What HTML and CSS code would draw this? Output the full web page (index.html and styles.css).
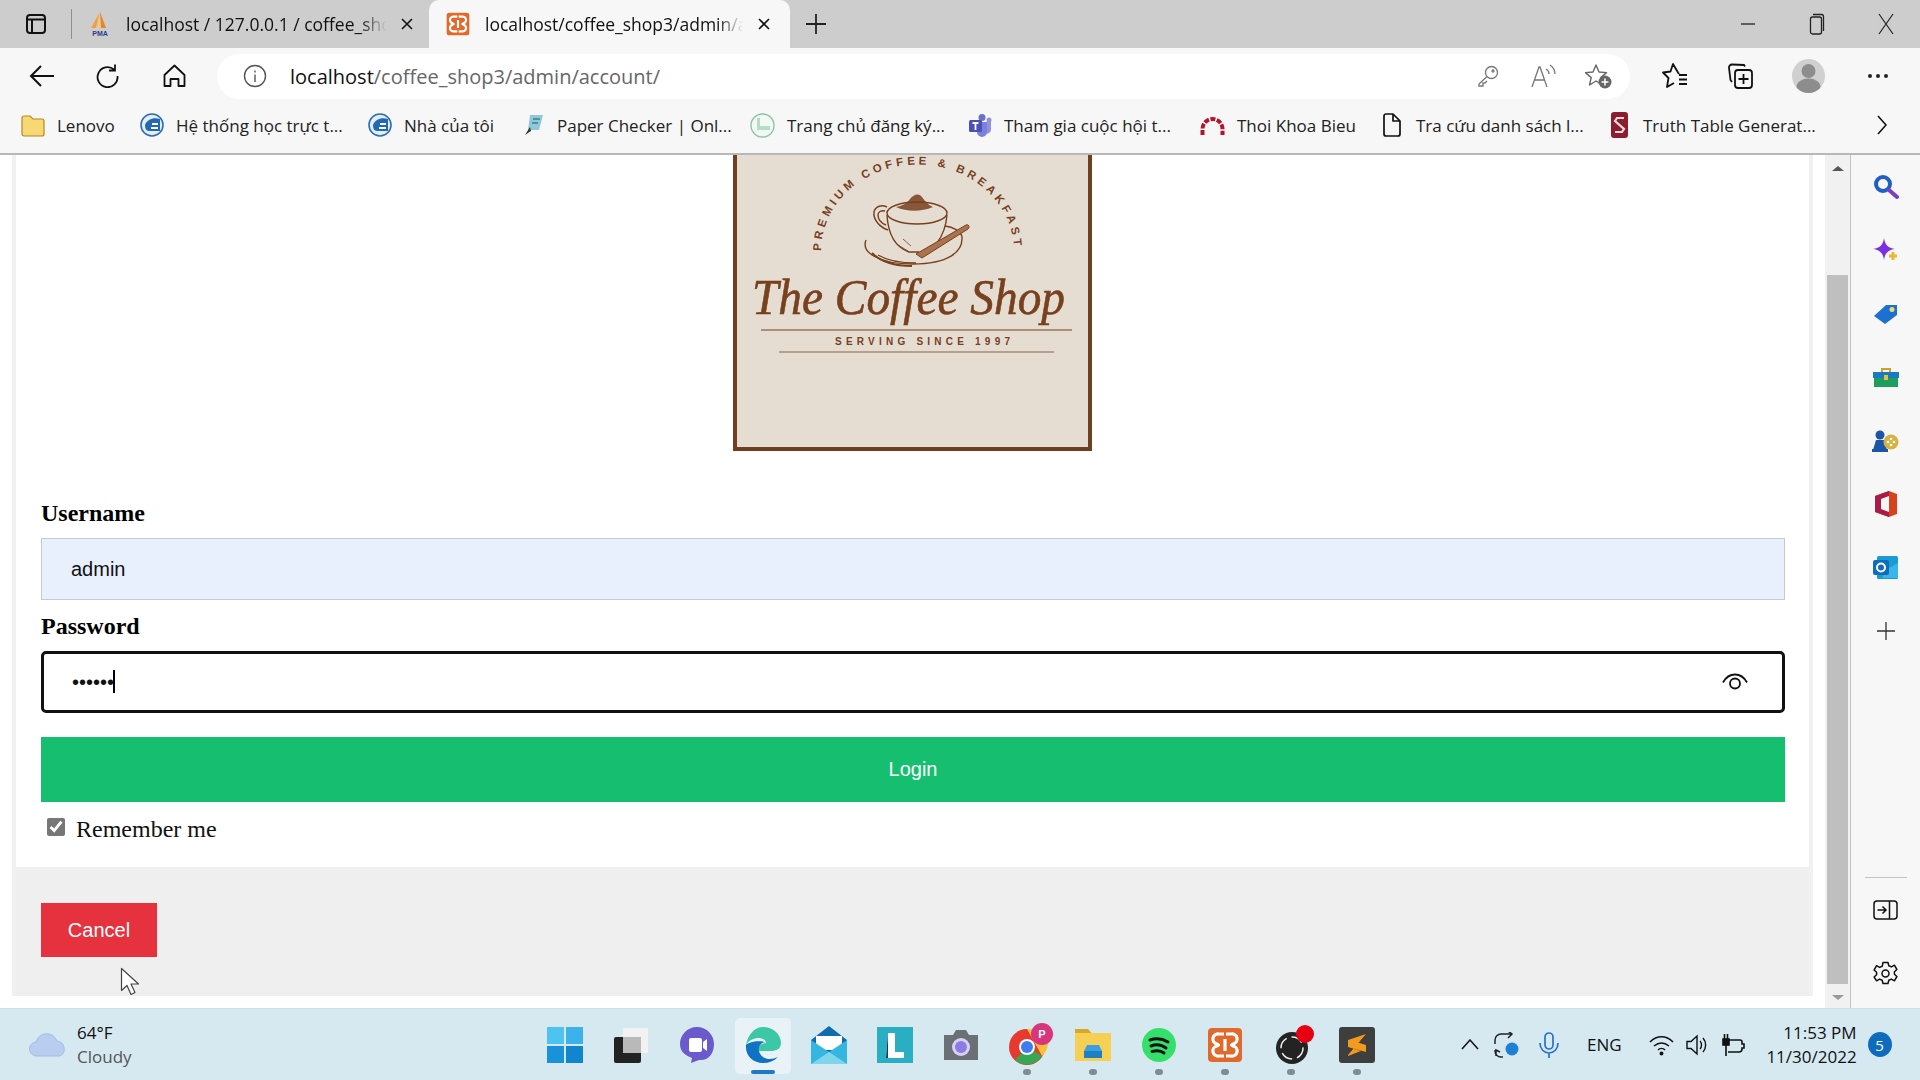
FILE: index.html
```html
<!DOCTYPE html>
<html lang="en">
  <head>
    <meta charset="UTF-8" />
    <title>localhost/coffee_shop3/admin/account/</title>
    <link rel="stylesheet" href="styles.css">
  </head>

  <body>
    <!-- shared icons -->
    <svg class="defs" aria-hidden="true">
      <symbol id="xampp" viewBox="0 0 36 36">
        <rect x="1" y="1" width="34" height="34" rx="4" fill="#e06a2c"/>
        <path d="M17 7h-5a5 5 0 0 0-2 10l1.500 1-1.500 1a5 5 0 0 0 2 10h5M19 7h5a5 5 0 0 1 2 10l-1.500 1 1.500 1a5 5 0 0 1-2 10h-5M18 12v12" fill="none" stroke="#fff" stroke-width="3.200" stroke-linejoin="round"/>
      </symbol>
      <symbol id="elearn" viewBox="0 0 24 24">
        <circle cx="12" cy="12" r="11" fill="#e4eef8" stroke="#2f6db3" stroke-width="1.6"/>
        <path d="M5 12c2-6 9-8 15-6v12H9c-3 0-4-3-4-6z" fill="#2268b2"/>
        <path d="M12 10h6v2h-6zm-1 4h7v2h-7z" fill="#fff"/>
      </symbol>
    </svg>

    <!-- tabs -->
    <header class="tabstrip">
      <svg class="tabstrip__toggle" width="20" height="20" viewBox="0 0 20 20" fill="none" stroke="#111" stroke-width="2"><rect x="1" y="1" width="18" height="18" rx="3"/><path d="M1 5.5h18M6 5.5V19" /></svg>
      <span class="tabstrip__divider"></span>
      <div class="tab">
        <svg width="24" height="26" viewBox="0 0 24 26"><path d="M12 1 3 17h5z" fill="#f0a040"/><path d="M12 1l1 16h5z" fill="#e8862a"/><path d="M12 3 9 17h3z" fill="#f7c77e"/><text x="12" y="25" text-anchor="middle" class="tab__pma">PMA</text></svg>
        <span class="tab__title">localhost / 127.0.0.1 / coffee_sho</span>
        <svg class="tab__close" width="14" height="14" viewBox="0 0 14 14" stroke="#111" stroke-width="1.6"><path d="M2 2l10 10M12 2 2 12"/></svg>
      </div>
      <div class="tab tab--active">
        <svg width="24" height="24"><use href="#xampp"/></svg>
        <span class="tab__title">localhost/coffee_shop3/admin/ac</span>
        <svg class="tab__close" width="14" height="14" viewBox="0 0 14 14" stroke="#111" stroke-width="1.6"><path d="M2 2l10 10M12 2 2 12"/></svg>
      </div>
      <svg class="tabstrip__new" width="22" height="22" viewBox="0 0 22 22" stroke="#222" stroke-width="1.8"><path d="M11 1v20M1 11h20"/></svg>
      <div class="winctl">
        <svg width="16" height="16" viewBox="0 0 16 16" stroke="#222" stroke-width="1.3"><path d="M1 8h14"/></svg>
        <svg width="16" height="26" viewBox="0 0 16 26" fill="none" stroke="#222" stroke-width="1.3"><rect x="1.5" y="6" width="11" height="17" rx="2"/><path d="M4 3.5h8.5a2 2 0 0 1 2 2V20"/></svg>
        <svg width="16" height="24" viewBox="0 0 16 24" stroke="#222" stroke-width="1.2"><path d="M1 2l14 20M15 2 1 22"/></svg>
      </div>
    </header>

    <!-- address bar -->
    <nav class="toolbar">
      <svg class="toolbar__back" width="26" height="24" viewBox="0 0 26 24" fill="none" stroke="#111" stroke-width="2"><path d="M25 12H2M12 2 2 12l10 10"/></svg>
      <svg class="toolbar__reload" width="25" height="24" viewBox="0 0 25 24" fill="none" stroke="#111" stroke-width="1.8"><path d="M19 5.5A10 10 0 1 0 22.5 12M20 .5v6h-6"/></svg>
      <svg class="toolbar__home" width="23" height="24" viewBox="0 0 23 24" fill="none" stroke="#111" stroke-width="1.8"><path d="M1.5 11 11.500 1.500 21.500 11v11h-6v-7h-8v7h-6z" stroke-linejoin="round"/></svg>
      <div class="omnibox">
        <svg class="omnibox__info" width="24" height="24" viewBox="0 0 24 24" fill="none" stroke="#555" stroke-width="1.400"><circle cx="12" cy="12" r="10.500"/><path d="M12 10.500V18M12 6.500v2"/></svg>
        <span class="omnibox__url"><b>localhost</b>/coffee_shop3/admin/account/</span>
        <svg class="omnibox__key" width="22" height="22" viewBox="0 0 22 22" fill="none" stroke="#777" stroke-width="1.300"><circle cx="14.500" cy="7.500" r="6"/><path d="M10 11.500 2 19v2h4v-3h2l2-2"/><circle cx="16" cy="6" r="1"/></svg>
        <svg class="omnibox__read" width="25" height="24" viewBox="0 0 25 24" fill="none" stroke="#777" stroke-width="1.300"><path d="M1 23 8 3h1l7 20M4 16h9M15 5c2 1 3 3 3 5M19 1c3 2 5 5 5 9"/></svg>
        <svg class="omnibox__fav" width="27" height="26" viewBox="0 0 27 26"><path d="M11 2l3 7 7.500.6-5.700 5 1.700 7.400-6.500-4-6.500 4 1.700-7.400-5.700-5L8 9z" fill="none" stroke="#666" stroke-width="1.400" stroke-linejoin="round"/><circle cx="20" cy="19" r="6.500" fill="#666"/><path d="M20 15.500v7M16.500 19h7" stroke="#fff" stroke-width="1.500"/></svg>
      </div>
      <svg class="toolbar__favs" width="26" height="26" viewBox="0 0 26 26" fill="none" stroke="#111" stroke-width="1.800"><path d="M17 11l-1-1.500L11 1 8.500 8.500 1 9.500l5.500 5.500L5 24l7-4M17 12h8M17 16.500h8M17 21h8" stroke-linejoin="round"/></svg>
      <svg class="toolbar__coll" width="26" height="26" viewBox="0 0 26 26" fill="none" stroke="#111" stroke-width="1.800"><rect x="8" y="7" width="17" height="18" rx="3"/><path d="M16.500 11v10M11.500 16h10M18 3.500 17 2 5 1.500a3 3 0 0 0-3 3.500l1.500 12 1.500 2"/></svg>
      <span class="avatar"><svg width="33" height="34" viewBox="0 0 33 34"><circle cx="16.500" cy="12" r="7" fill="#8d8d8d"/><ellipse cx="16.500" cy="28" rx="12" ry="8.500" fill="#8d8d8d"/></svg></span>
      <span class="toolbar__more"><i></i><i></i><i></i></span>
    </nav>

    <!-- favourites -->
    <div class="bookmarks">
      <a class="bookmark"><svg width="24" height="23" viewBox="0 0 24 23"><path d="M1 4a2 2 0 0 1 2-2h6l3 3h9a2 2 0 0 1 2 2v13a2 2 0 0 1-2 2H3a2 2 0 0 1-2-2z" fill="#f8d775" stroke="#b08a25" stroke-width="1.200"/></svg>Lenovo</a>
      <a class="bookmark"><svg width="24" height="24"><use href="#elearn"/></svg>Hệ thống học trực t...</a>
      <a class="bookmark"><svg width="24" height="24"><use href="#elearn"/></svg>Nhà của tôi</a>
      <a class="bookmark"><svg width="23" height="24" viewBox="0 0 23 24"><path d="M8 2h13l-4 15H6z" fill="#8fc9d8"/><path d="M11 6h7M10 10h6" stroke="#3a7f96" stroke-width="1.500"/><path d="M8 14l-5 8 6-4z" fill="#333"/></svg>Paper Checker | Onl...</a>
      <a class="bookmark"><svg width="25" height="25" viewBox="0 0 25 25"><circle cx="12.500" cy="12.500" r="11.500" fill="#f2f8f4" stroke="#8cc4a4" stroke-width="1.400"/><path d="M7 5v12h13v-4H10V5z" fill="#b6dcc4"/></svg>Trang chủ đăng ký...</a>
      <a class="bookmark"><svg width="23" height="24" viewBox="0 0 23 24"><circle cx="13" cy="4.500" r="3.500" fill="#6a6fd0"/><circle cx="20" cy="7" r="2.500" fill="#8f93e0"/><path d="M15 9h7v8a4 4 0 0 1-6 3z" fill="#8f93e0"/><path d="M7 9h11v10a5 5 0 0 1-10 0z" fill="#7b80da"/><rect y="7" width="13" height="12" rx="1.500" fill="#4b50b8"/><path d="M3.500 10h6M6.500 10v7" stroke="#fff" stroke-width="1.800"/></svg>Tham gia cuộc hội t...</a>
      <a class="bookmark"><svg width="25" height="20" viewBox="0 0 25 20" fill="none" stroke="#b5122c" stroke-width="4" stroke-dasharray="5 1.500"><path d="M2.500 20v-6a10 10 0 0 1 20 0v6"/></svg>Thoi Khoa Bieu</a>
      <a class="bookmark bookmark--narrow"><svg width="18" height="24" viewBox="0 0 18 24" fill="none" stroke="#111" stroke-width="1.700"><path d="M1 3a2 2 0 0 1 2-2h7l7 7v13a2 2 0 0 1-2 2H3a2 2 0 0 1-2-2zM10 1v7h7" stroke-linejoin="round"/></svg>Tra cứu danh sách l...</a>
      <a class="bookmark bookmark--narrow"><svg width="17" height="26" viewBox="0 0 17 26"><rect width="17" height="26" rx="3" fill="#8c1d2f"/><path d="M13 6H6L4 9l9 8-2 3H4" fill="none" stroke="#f2d9dc" stroke-width="2.200"/></svg>Truth Table Generat...</a>
      <svg class="bookmarks__more" width="10" height="20" viewBox="0 0 10 20" fill="none" stroke="#111" stroke-width="1.600"><path d="M1 1l8 9-8 9"/></svg>
    </div>

    <main class="viewport">
      <div class="page">
        <section class="modal">
          <div class="modal__body">
            <div class="logo">
              <svg width="359" height="296" viewBox="0 0 359 296">
                <rect x="2" y="-10" width="355" height="304" fill="#e6ddd2" stroke="#6f3f1f" stroke-width="4"/>
                <defs><path id="logo-arc" d="M88 96a96 86 0 0 1 193 0"/></defs>
                <text class="logo__arc"><textPath href="#logo-arc" textLength="282" lengthAdjust="spacing">PREMIUM COFFEE &amp; BREAKFAST</textPath></text>
                <g fill="none" stroke="#77401e" stroke-width="1.400">
                  <path d="M133 85c-5 12 12 24 47 24s50-12 49-27c-1-6-9-10-17-11"/>
                  <path d="M145 100c10 6 24 8 38 8"/>
                  <path d="M139 98c10 10 26 13 40 13" stroke-width="2"/>
                  <ellipse cx="184" cy="58" rx="30" ry="11"/>
                  <path d="M154 60c1 18 8 32 22 37h10M214 60c-1 12-4 20-10 28"/>
                  <path d="M154 52c-6-3-12 0-13 5-1 7 5 15 14 18M152 56c-4-1-7 1-7 4 0 4 3 8 8 10"/>
                  <path d="M165 90l10 6M170 84l8 7" stroke-width=".8"/>
                </g>
                <path d="M163 52c6-1 10-3 14-8 4-5 9-6 12-2 3 4 6 8 11 10-12 5-26 5-37 0z" fill="#77401e" opacity=".85"/>
                <path d="M183 99l50-29c3-1 4 2 2 4l-46 29z" fill="#a9734f" stroke="#77401e"/>
                <text x="19" y="159" class="logo__title" textLength="313" lengthAdjust="spacingAndGlyphs">The Coffee Shop</text>
                <path d="M28 175h311" stroke="#77401e" stroke-width="1.200"/>
                <text x="102" y="190" class="logo__since" textLength="175">SERVING SINCE 1997</text>
                <path d="M46 197h275" stroke="#a98a75" stroke-width="1.500"/>
              </svg>
            </div>
            <form class="login">
              <label class="login__label" for="username">Username</label>
              <input class="login__input login__input--filled" type="text" id="username" value="admin" />
              <label class="login__label" for="password">Password</label>
              <div class="login__pass">
                <input class="login__input login__input--focus" type="password" id="password" value="123456" />
                <span class="login__caret"></span>
                <svg class="login__eye" width="26" height="18" viewBox="0 0 26 18" fill="none" stroke="#111" stroke-width="1.800"><path d="M1 9.500C4 4 8 1.500 13 1.500s9 2.500 12 8"/><circle cx="13" cy="10.500" r="5"/></svg>
              </div>
              <button class="login__submit" type="button">Login</button>
              <label class="login__remember"><input type="checkbox" checked /> Remember me</label>
            </form>
          </div>
          <div class="modal__footer">
            <button class="cancel" type="button">Cancel</button>
          </div>
        </section>
        <svg class="pointer" width="20" height="29" viewBox="0 0 20 29"><path d="M1.500 1.500v22l5.500-5 4 9 4-2-4-8.500h7.500z" fill="#fff" stroke="#444" stroke-width="1.200" stroke-linejoin="round"/></svg>
      </div>

      <div class="scrollbar">
        <span class="scrollbar__up"></span>
        <span class="scrollbar__thumb"></span>
        <span class="scrollbar__down"></span>
      </div>

      <aside class="sidebar">
        <span class="sidebar__item"><svg width="26" height="26" viewBox="0 0 26 26" fill="none"><circle cx="10" cy="10" r="7" stroke="#1f5fc4" stroke-width="4"/><path d="M16 16l8 7" stroke="#7a3fc0" stroke-width="4" stroke-linecap="round"/></svg></span>
        <span class="sidebar__item"><svg width="27" height="24" viewBox="0 0 27 24"><path d="M12 0c1 7 4 10 11 11-7 1-10 4-11 11-1-7-4-10-11-11 7-1 10-4 11-11z" fill="#7a2fe0"/><path d="M21 14v8M17 18h8" stroke="#eab72e" stroke-width="3"/></svg></span>
        <span class="sidebar__item"><svg width="25" height="22" viewBox="0 0 25 22"><path d="M1 13 13 2h11v10L12 21z" fill="#1d6fd1"/><circle cx="19" cy="6.500" r="2.500" fill="#f5d76e"/></svg></span>
        <span class="sidebar__item"><svg width="26" height="20" viewBox="0 0 26 20"><path d="M9 5V2h8v3" fill="none" stroke="#c9a227" stroke-width="2"/><rect y="5" width="26" height="6" fill="#1b78c4"/><rect x="1" y="11" width="24" height="9" fill="#1f9d5c"/><rect x="11" y="8" width="4" height="5" fill="#e9c23c"/></svg></span>
        <span class="sidebar__item"><svg width="27" height="24" viewBox="0 0 27 24"><circle cx="8" cy="6" r="4.500" fill="#1a55a8"/><path d="M4 11h8l3 10H1z" fill="#1a55a8"/><rect y="20" width="16" height="3" fill="#1a55a8"/><circle cx="19" cy="13" r="7.500" fill="#d9b13f"/><circle cx="16" cy="13" r="1.300" fill="#fff"/><circle cx="22" cy="13" r="1.300" fill="#fff"/><circle cx="19" cy="10" r="1.300" fill="#fff"/><circle cx="19" cy="16" r="1.300" fill="#fff"/></svg></span>
        <span class="sidebar__item"><svg width="24" height="28" viewBox="0 0 24 28"><path d="M15 1 1 6v16l14 5 8-3V4z" fill="#d9411e"/><path d="M1 6l14-5v5L7 9v10l8 3v5L1 22z" fill="#a81c46"/><path d="M7 9l8-3v16l-8-3z" fill="#f7f7f7"/></svg></span>
        <span class="sidebar__item"><svg width="25" height="25" viewBox="0 0 25 25"><rect x="4" y="1" width="21" height="23" rx="1.500" fill="#1c9ad6"/><path d="M14 14 25 8v15H9z" fill="#38b6ea"/><rect y="5" width="16" height="15" rx="2" fill="#0f6cbd"/><circle cx="8" cy="12.500" r="4" fill="none" stroke="#fff" stroke-width="2"/></svg></span>
        <span class="sidebar__item"><svg width="18" height="18" viewBox="0 0 18 18" stroke="#333" stroke-width="1.300"><path d="M9 0v18M0 9h18"/></svg></span>
        <div class="sidebar__bottom">
          <hr class="sidebar__rule" />
          <span class="sidebar__item"><svg width="25" height="20" viewBox="0 0 25 20" fill="none" stroke="#111" stroke-width="1.500"><rect x="1" y="1" width="23" height="18" rx="3"/><path d="M16.500 1v18M4.500 10h8M9.500 6.500l3.500 3.500-3.500 3.500"/></svg></span>
          <span class="sidebar__item"><svg width="25" height="25" viewBox="0 0 25 25" fill="none" stroke="#111" stroke-width="1.500"><path d="M10 1.500h5l.8 3.300 2.600 1.100 3-1.700 2.500 4.300-2.500 2.300v2.400l2.500 2.300-2.500 4.300-3-1.700-2.600 1.100-.8 3.300h-5l-.8-3.300-2.600-1.100-3 1.700L1.100 16l2.500-2.300v-2.400L1.100 9l2.500-4.300 3 1.700 2.600-1.100z" stroke-linejoin="round"/><circle cx="12.500" cy="12.500" r="3.500"/></svg></span>
        </div>
      </aside>
    </main>

    <!-- windows taskbar -->
    <footer class="taskbar">
      <div class="weather">
        <svg width="38" height="24" viewBox="0 0 38 24"><path d="M8 23a7 7 0 0 1-1-14 11 11 0 0 1 21-1 8 8 0 0 1 3 15z" fill="#b8cdf0" stroke="#a3bce6"/></svg>
        <div class="weather__text"><span>64°F</span><span class="weather__sub">Cloudy</span></div>
      </div>

      <div class="apps">
        <span class="app"><svg width="36" height="36" viewBox="0 0 36 36"><path d="M0 0h17v17H0z" fill="#4fc3ef"/><path d="M19 0h17v17H19z" fill="#3bb3ea"/><path d="M0 19h17v17H0z" fill="#1a92d9"/><path d="M19 19h17v17H19z" fill="#1285d0"/></svg></span>
        <span class="app"><svg width="36" height="36" viewBox="0 0 36 36"><rect x="1" y="10" width="27" height="26" rx="2" fill="#222"/><rect x="10" y="1" width="25" height="25" rx="1" fill="#f2f2f2"/><rect x="10" y="10" width="18" height="16" fill="#b9b9b9"/></svg></span>
        <span class="app"><svg width="34" height="36" viewBox="0 0 34 36"><path d="M17 0c10 0 17 8 17 17 0 10-6 17-15 16l-8 3 1-5C4 28 0 24 0 17 0 8 7 0 17 0z" fill="#6a5acd"/><rect x="9" y="11" width="13" height="14" rx="2" fill="#fff"/><path d="M23 15l4-3v12l-4-3z" fill="#fff"/></svg></span>
        <span class="app app--active"><svg width="38" height="38" viewBox="0 0 38 38"><path d="M19 1c10 0 18 7 18 16 0 6-5 8-10 8H13c0-5 5-8 9-8 0-6-14-8-20 2C4 8 11 1 19 1z" fill="#3cc8a6"/><path d="M2 19C1 30 9 37 19 37c6 0 11-2 15-6-8 4-17 2-19-6-1-4 1-8 6-9-9-2-17 1-19 3z" fill="#0f72c4"/></svg><i class="app__bar"></i></span>
        <span class="app"><svg width="36" height="38" viewBox="0 0 36 38"><path d="M0 14 18 0l18 14v24H0z" fill="#0f6cad"/><path d="M5 10h26v14H5z" fill="#fff"/><path d="M0 14l18 12 18-12v24H0z" fill="#35b6e0"/><path d="M0 38l18-12 18 12z" fill="#7fd4ee"/></svg></span>
        <span class="app"><svg width="36" height="36" viewBox="0 0 36 36"><rect width="36" height="36" fill="#2aaec4"/><path d="M11 6h7v19h9v6H9z" fill="#fff"/><path d="M9 31l2-25v25z" fill="#123a6e"/></svg></span>
        <span class="app"><svg width="36" height="32" viewBox="0 0 36 32"><path d="M1 6h9l3-5h10l3 5h9v25H1z" fill="#6b6f76"/><circle cx="18" cy="18" r="9" fill="#d8d0f5"/><circle cx="18" cy="18" r="6" fill="#8c7ae6"/></svg></span>
        <span class="app app--open"><svg class="app__chrome" width="44" height="44" viewBox="0 0 44 44"><circle cx="18" cy="24" r="18" fill="#e8392e"/><path d="M18 24 33 33a18 18 0 0 1-27 4z" fill="#34a853"/><path d="M18 6h15a18 18 0 0 1 0 27z" fill="#f6c23a"/><circle cx="18" cy="24" r="8" fill="#fff"/><circle cx="18" cy="24" r="6" fill="#3d7df0"/><circle cx="33" cy="11" r="11" fill="#d9357f"/><text x="33" y="15" text-anchor="middle" class="app__badge">P</text></svg><i class="app__dot"></i></span>
        <span class="app app--open"><svg width="38" height="36" viewBox="0 0 38 36"><path d="M1 2h13l4 4h19v28H1z" fill="#f6cf55"/><path d="M1 2h13l3 4H1z" fill="#d9a52a"/><path d="M10 24h18v7H10z" fill="#1f7fc4"/><path d="M13 18h12l3 6H10z" fill="#3ca0de"/></svg><i class="app__dot"></i></span>
        <span class="app app--open"><svg width="34" height="34" viewBox="0 0 34 34"><circle cx="17" cy="17" r="17" fill="#35e06a"/><path d="M8 12c6-2 13-1 18 2M9 18c5-2 11-1 15 2M10 23.500c4-1 9-1 12 1.500" fill="none" stroke="#111" stroke-width="3" stroke-linecap="round"/></svg><i class="app__dot"></i></span>
        <span class="app app--open"><svg width="36" height="36"><use href="#xampp"/></svg><i class="app__dot"></i></span>
        <span class="app app--open"><svg class="app__obs" width="40" height="42" viewBox="0 0 40 42"><circle cx="18" cy="24" r="16" fill="#232323"/><circle cx="18" cy="24" r="11" fill="none" stroke="#eee" stroke-width="1.500" stroke-dasharray="12 5"/><circle cx="31" cy="10" r="9" fill="#e60012"/></svg><i class="app__dot"></i></span>
        <span class="app app--open"><svg width="36" height="36" viewBox="0 0 36 36"><rect width="36" height="36" rx="3" fill="#3e3e3e"/><path d="M27 7 9 13v7l13 4-13 5v-1M9 20l18 5v-7L14 14" fill="#f39a1e"/></svg><i class="app__dot"></i></span>
      </div>

      <div class="tray">
        <svg class="tray__chevron" width="18" height="11" viewBox="0 0 18 11" fill="none" stroke="#111" stroke-width="1.500"><path d="M1 10 9 1l8 9"/></svg>
        <svg class="tray__sync" width="25" height="26" viewBox="0 0 25 26" fill="none" stroke="#222" stroke-width="1.500"><path d="M1 12V8a6 6 0 0 1 6-6h11M14 -1l4 3-4 4M9 25H7a6 6 0 0 1-6-6v-1M6 20l-4-2v6"/><circle cx="18" cy="17" r="6.500" fill="#1f7fd4" stroke="none"/></svg>
        <svg class="tray__mic" width="20" height="26" viewBox="0 0 20 26" fill="none" stroke="#2a72c8" stroke-width="1.700"><rect x="6" y="1" width="8" height="16" rx="4"/><path d="M1 11c0 6 4 10 9 10s9-4 9-10M10 21v5"/></svg>
        <span class="tray__lang">ENG</span>
        <svg class="tray__wifi" width="25" height="22" viewBox="0 0 25 22" fill="none" stroke="#111" stroke-width="1.600"><path d="M1 8c7-7 16-7 23 0M5 12c5-4 10-4 15 0M9 16c2-2 5-2 7 0"/><circle cx="12.500" cy="19.500" r="1.200" fill="#111"/></svg>
        <svg class="tray__sound" width="22" height="22" viewBox="0 0 22 22" fill="none" stroke="#111" stroke-width="1.400"><path d="M1 7.500h4L11 2v18l-6-5.500H1zM14 7c2 2 2 6 0 8M17 4c3.500 4 3.500 10 0 14"/></svg>
        <svg class="tray__battery" width="24" height="24" viewBox="0 0 24 24" fill="none" stroke="#111" stroke-width="1.600"><path d="M7 7h12a2 2 0 0 1 2 2v2h2v4h-2v1a3 3 0 0 1-3 3H7"/><rect x="2" y="6" width="6" height="6" fill="#111"/><path d="M3.500 1v5M6.500 1v5M5 12v11"/></svg>
        <div class="tray__clock"><span>11:53 PM</span><span>11/30/2022</span></div>
        <span class="tray__badge">5</span>
      </div>
    </footer>
  </body>
</html>
```

FILE: styles.css
```css
/* page frame */
html,
body {
  margin: 0;
  padding: 0;
  height: 100%;
}

body {
  display: flex;
  flex-direction: column;
  height: 1080px;
  overflow: hidden;
  font-family: "Open Sans", "Noto Sans", sans-serif;
  color: #111;
  background: #fff;
}

svg {
  flex: none;
  display: block;
}

.defs {
  position: absolute;
  width: 0;
  height: 0;
}

/* tabs */
.tabstrip {
  height: 48px;
  flex: none;
  display: flex;
  align-items: center;
  background: #cdcdcd;
  padding-left: 26px;
}

.tabstrip__divider {
  width: 1px;
  height: 30px;
  margin-left: 25px;
  background: #8f8f8f;
}

.tab {
  width: 341px;
  height: 48px;
  box-sizing: border-box;
  margin-left: 16px;
  display: flex;
  align-items: center;
  font-size: 17.500px;
}

.tab svg:first-child {
  margin-right: 14px;
}

.tab__pma {
  font: bold 7px "Liberation Sans", sans-serif;
  fill: #24408f;
}

.tab__title {
  width: 260px;
  white-space: nowrap;
  -webkit-mask-image: linear-gradient(to right, #000 90%, transparent);
  mask-image: linear-gradient(to right, #000 90%, transparent);
  flex: none;
}

.tab__close {
  margin-left: 14px;
}

.tab--active {
  width: 361px;
  margin-left: 0;
  padding-left: 17px;
  background: #f7f7f7;
  border-radius: 10px 10px 0 0;
}

.tab--active svg:first-child {
  margin-right: 15px;
}

.tab--active .tab__title {
  width: 258px;
}

.tabstrip__new {
  margin-left: 15px;
}

.winctl {
  margin-left: auto;
  display: flex;
  align-items: center;
  gap: 53px;
  padding-right: 26px;
}

/* address bar */
.toolbar {
  height: 56px;
  flex: none;
  display: flex;
  align-items: center;
  background: #f7f7f7;
  padding-left: 29px;
}

.toolbar__reload {
  margin-left: 40px;
}

.toolbar__home {
  margin-left: 43px;
}

.omnibox {
  width: 1413px;
  height: 45px;
  margin-left: 31px;
  display: flex;
  align-items: center;
  box-sizing: border-box;
  padding-left: 26px;
  background: #fff;
  border-radius: 23px;
}

.omnibox__url {
  margin-left: 23px;
  font-size: 20px;
  color: #666;
}

.omnibox__url b {
  font-weight: 400;
  color: #111;
}

.omnibox__key {
  margin-left: auto;
}

.omnibox__read {
  margin-left: 32px;
}

.omnibox__fav {
  margin-left: 29px;
  margin-right: 18px;
}

.toolbar__favs {
  margin-left: 32px;
}

.toolbar__coll {
  margin-left: 39px;
}

.avatar {
  width: 33px;
  height: 34px;
  margin-left: 39px;
  border-radius: 50%;
  background: #d0d0d0;
  overflow: hidden;
}

.toolbar__more {
  display: flex;
  gap: 4px;
  margin-left: 43px;
}

.toolbar__more i {
  width: 4px;
  height: 4px;
  border-radius: 50%;
  background: #222;
}

/* favourites */
.bookmarks {
  height: 51px;
  flex: none;
  box-sizing: border-box;
  display: grid;
  grid-template-columns: 119px 228px 154px 228px 219px 231px 183px 228px 266px 1fr;
  align-items: center;
  padding-left: 21px;
  padding-bottom: 7px;
  background: #f7f7f7;
  border-bottom: 2px solid #b8b8b8;
  font-size: 17px;
}

.bookmark {
  display: flex;
  align-items: center;
  gap: 12px;
  white-space: nowrap;
  color: #222;
}

.bookmark--narrow {
  gap: 15px;
}

/* page */
.viewport {
  flex: 1;
  display: flex;
  min-height: 0;
}

.page {
  flex: 1;
  position: relative;
  padding-left: 12px;
  padding-right: 12px;
  overflow: hidden;
}

.modal {
  border-left: 4px solid #f1f1f1;
  border-right: 4px solid #f1f1f1;
  border-bottom: 1px solid #eee;
  background: #fff;
}

.modal__body {
  padding: 0 24px 20px 25px;
}

.logo {
  display: flex;
  justify-content: center;
  height: 296px;
  padding-right: 2px;
}

.logo__arc {
  font: bold 11.500px "Liberation Sans", sans-serif;
  fill: #77401e;
}

.logo__title {
  font: italic 50px "Liberation Serif", serif;
  fill: #77401e;
  stroke: #77401e;
  stroke-width: .6px;
}

.logo__since {
  font: bold 10px "Liberation Sans", sans-serif;
  fill: #77401e;
}

.login {
  display: flex;
  flex-direction: column;
  margin-top: 47px;
}

.login__label {
  display: block;
  height: 30px;
  line-height: 30px;
  margin-bottom: 10px;
  font: bold 24px/30px "Liberation Serif", serif;
  color: #000;
}

.login__input {
  display: block;
  width: 100%;
  height: 62px;
  box-sizing: border-box;
  margin: 0 0 11px;
  padding: 0 29px;
  border: 1px solid #c6c9d2;
  font: 20px "Liberation Sans", sans-serif;
  color: #111;
  outline: none;
}

.login__input--filled {
  background: #e8f0fe;
}

.login__input--focus {
  border: 3px solid #111;
  border-radius: 5px;
  padding: 0 28px;
  margin: 0;
}

.login__pass {
  position: relative;
}

.login__caret {
  position: absolute;
  left: 72px;
  top: 19px;
  width: 2px;
  height: 23px;
  background: #000;
}

.login__eye {
  position: absolute;
  right: 37px;
  top: 22px;
}

.login__submit {
  height: 65px;
  margin-top: 24px;
  border: none;
  background: #15bf6f;
  color: #fff;
  font: 20px "Liberation Sans", sans-serif;
}

.login__remember {
  display: flex;
  align-items: center;
  gap: 11px;
  margin: 9px 0 0 6px;
  height: 36px;
  font: 24px "Liberation Serif", serif;
  color: #111;
}

.login__remember input {
  width: 18px;
  height: 18px;
  margin: 0 0 4px;
  accent-color: #777;
}

.modal__footer {
  height: 128px;
  box-sizing: border-box;
  padding: 36px 25px 0;
  background: #efefef;
}

.cancel {
  width: 116px;
  height: 54px;
  border: none;
  background: #e5323e;
  color: #fff;
  font: 20px "Liberation Sans", sans-serif;
}

.pointer {
  position: absolute;
  left: 120px;
  top: 812px;
}

/* scrollbar */
.scrollbar {
  width: 25px;
  flex: none;
  position: relative;
  background: #f1f1f1;
  border-right: 1px solid #c4c4c4;
}

.scrollbar__thumb {
  position: absolute;
  left: 2px;
  right: 2px;
  top: 120px;
  height: 709px;
  background: #bfbfbf;
}

.scrollbar__up,
.scrollbar__down {
  position: absolute;
  left: 7px;
  width: 0;
  height: 0;
  border-left: 6px solid transparent;
  border-right: 6px solid transparent;
}

.scrollbar__up {
  top: 11px;
  border-bottom: 5px solid #555;
}

.scrollbar__down {
  bottom: 8px;
  border-top: 5px solid #999;
}

/* edge sidebar */
.sidebar {
  width: 69px;
  flex: none;
  display: flex;
  flex-direction: column;
  background: #f7f7f7;
}

.sidebar__item {
  height: 63.500px;
  flex: none;
  display: flex;
  align-items: center;
  justify-content: center;
}

.sidebar__bottom {
  margin-top: auto;
  padding-bottom: 3px;
}

.sidebar__rule {
  width: 42px;
  height: 1px;
  margin: 0 auto;
  border: none;
  background: #c4c4c4;
}

/* taskbar */
.taskbar {
  height: 72px;
  flex: none;
  display: flex;
  align-items: center;
  background: #d6e9f1;
  border-top: 1px solid #cfdfe6;
  box-sizing: border-box;
}

.weather {
  width: 532px;
  flex: none;
  box-sizing: border-box;
  padding-left: 29px;
  display: flex;
  align-items: center;
  gap: 10px;
}

.weather__text {
  display: flex;
  flex-direction: column;
  font-size: 17px;
  line-height: 24px;
}

.weather__sub {
  color: #555;
}

.apps {
  display: flex;
}

.app {
  width: 66px;
  height: 72px;
  flex: none;
  box-sizing: border-box;
  position: relative;
  display: flex;
  align-items: center;
  justify-content: center;
}

.app__chrome {
  margin-left: 8px;
}

.app__obs {
  margin-left: 6px;
}

.app--active::before {
  content: "";
  position: absolute;
  left: 5px;
  right: 5px;
  top: 9px;
  bottom: 7px;
  background: #e9f3f7;
  border-radius: 5px;
}

.app--active svg {
  position: relative;
}

.app__bar {
  position: absolute;
  left: 21px;
  bottom: 7px;
  width: 24px;
  height: 4px;
  border-radius: 2px;
  background: #1f78c8;
}

.app__dot {
  position: absolute;
  left: 29px;
  bottom: 6px;
  width: 8px;
  height: 6px;
  border-radius: 3px;
  background: #7f8c93;
}

.app__badge {
  font: bold 11px "Liberation Sans", sans-serif;
  fill: #fff;
}

.tray {
  margin-left: 71px;
  flex: 1;
  display: flex;
  align-items: center;
}

.tray__sync {
  margin-left: 15px;
}

.tray__mic {
  margin-left: 20px;
}

.tray__lang {
  margin-left: 28px;
  font-size: 17px;
}

.tray__wifi {
  margin-left: 27px;
}

.tray__sound {
  margin-left: 12px;
}

.tray__battery {
  margin-left: 13px;
}

.tray__clock {
  width: 112px;
  display: flex;
  flex-direction: column;
  align-items: flex-end;
  font-size: 17px;
  line-height: 24px;
}

.tray__badge {
  width: 24px;
  height: 25px;
  margin-left: 11px;
  display: flex;
  align-items: center;
  justify-content: center;
  border-radius: 50%;
  background: #0f6cbd;
  color: #fff;
  font-size: 15px;
}
```
